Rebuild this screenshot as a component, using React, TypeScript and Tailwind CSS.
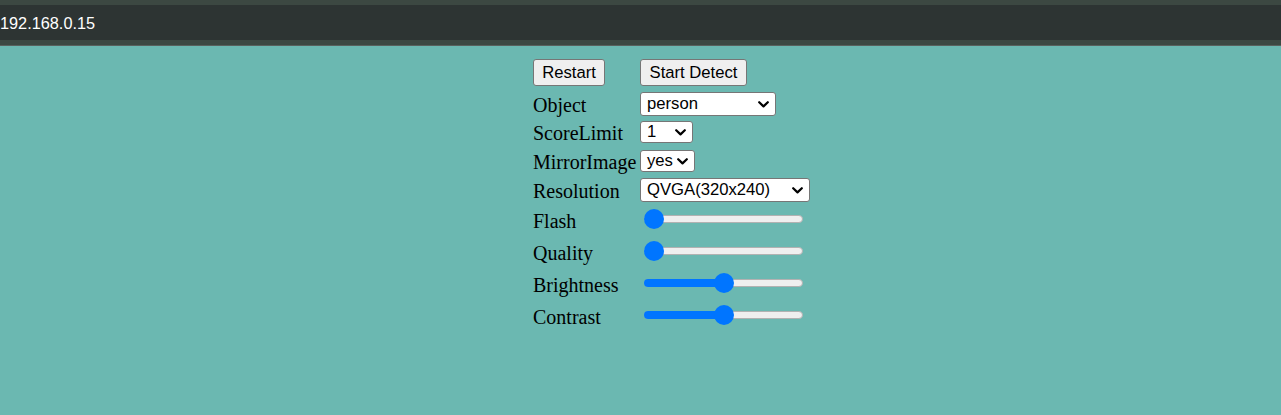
import React from 'react';

const serif = { fontFamily: '"Liberation Serif", "Times New Roman", serif' };

function Chevron() {
  return (
    <svg width="11" height="7" viewBox="0 0 11 7" className="shrink-0">
      <path d="M1.2 1.2 L5.5 5.4 L9.8 1.2" fill="none" stroke="#000" strokeWidth="2.2" strokeLinecap="round" strokeLinejoin="round" />
    </svg>
  );
}

function FakeSelect(props: { value: string; w: string; h: string }) {
  return (
    <div
      className={`${props.w} ${props.h} flex items-center justify-between pl-[6px] pr-[6px] bg-white border border-[#767676] rounded-[3px] text-[16.67px] text-black font-['Liberation_Sans',Arial,sans-serif] leading-none`}
    >
      <span className="whitespace-nowrap">{props.value}</span>
      <Chevron />
    </div>
  );
}

function Slider(props: { value: number }) {
  // value 0..1; thumb centre travels from 10px to width-10px
  const travel = 159 - 20;
  const pos = 10 + travel * props.value;
  return (
    <div className="relative w-[159px] h-[20px] ml-[4px]">
      <div className="absolute left-0 right-0 top-[6px] h-[8px] rounded-full bg-[#efefef] border border-[#b2b2b2]" />
      {props.value > 0 ? (
        <div className="absolute left-0 top-[6px] h-[8px] rounded-l-full bg-[#0075ff]" style={{ width: pos }} />
      ) : null}
      <div className="absolute top-0 w-[20px] h-[20px] rounded-full bg-[#0075ff]" style={{ left: pos - 10 }} />
    </div>
  );
}

function Btn(props: { label: string; w: string }) {
  return (
    <button
      type="button"
      className={`${props.w} h-[27px] flex items-center justify-center pt-[1px] bg-[#efefef] border border-[#767676] rounded-[3px] text-[16.67px] text-black font-['Liberation_Sans',Arial,sans-serif] leading-none`}
    >
      {props.label}
    </button>
  );
}

function Row(props: { label?: string; h: string; mt: string; low?: boolean; children: React.ReactNode }) {
  return (
    <div className={`flex items-center ${props.h} ${props.mt}`}>
      <div
        className={`w-[107px] shrink-0 text-[20px] text-black leading-none ${props.low ? 'pt-[3px]' : 'pt-[1px]'}`}
        style={serif}
      >
        {props.label}
      </div>
      {props.children}
    </div>
  );
}

export default function App() {
  return (
    <div className="min-h-screen bg-[#6bb8b1]">
      <div className="h-[5px] bg-[#3c4842]" />
      <div className="h-[35px] bg-[#2d3433] flex items-center">
        <span className="text-white text-[16.3px] leading-none pt-[1px] font-['Liberation_Sans',Arial,sans-serif]">
          192.168.0.15
        </span>
      </div>
      <div className="h-[5px] bg-[#3c4842]" />
      <div className="h-px bg-[#59605d]" />

      <div className="flex justify-center pt-[13px]">
        <div className="w-[215px] overflow-visible">
          <div className="w-[300px]">
            <div className="flex items-center h-[27px]">
              <div className="w-[107px] shrink-0">
                <Btn label="Restart" w="w-[72px]" />
              </div>
              <Btn label="Start Detect" w="w-[107px]" />
            </div>
            <Row label="Object" h="h-[24px]" mt="mt-[6px]">
              <FakeSelect value="person" w="w-[136px]" h="h-[24px]" />
            </Row>
            <Row label="ScoreLimit" h="h-[22px]" mt="mt-[5px]">
              <FakeSelect value="1" w="w-[53px]" h="h-[22px]" />
            </Row>
            <Row label="MirrorImage" h="h-[22px]" mt="mt-[7px]">
              <FakeSelect value="yes" w="w-[55px]" h="h-[22px]" />
            </Row>
            <Row label="Resolution" h="h-[24px]" mt="mt-[6px]">
              <FakeSelect value="QVGA(320x240)" w="w-[170px]" h="h-[24px]" />
            </Row>
            <Row label="Flash" h="h-[20px]" mt="mt-[7px]" low>
              <Slider value={0} />
            </Row>
            <Row label="Quality" h="h-[20px]" mt="mt-[12px]" low>
              <Slider value={0} />
            </Row>
            <Row label="Brightness" h="h-[20px]" mt="mt-[12px]" low>
              <Slider value={0.5} />
            </Row>
            <Row label="Contrast" h="h-[20px]" mt="mt-[12px]" low>
              <Slider value={0.5} />
            </Row>
          </div>
        </div>
      </div>
    </div>
  );
}
